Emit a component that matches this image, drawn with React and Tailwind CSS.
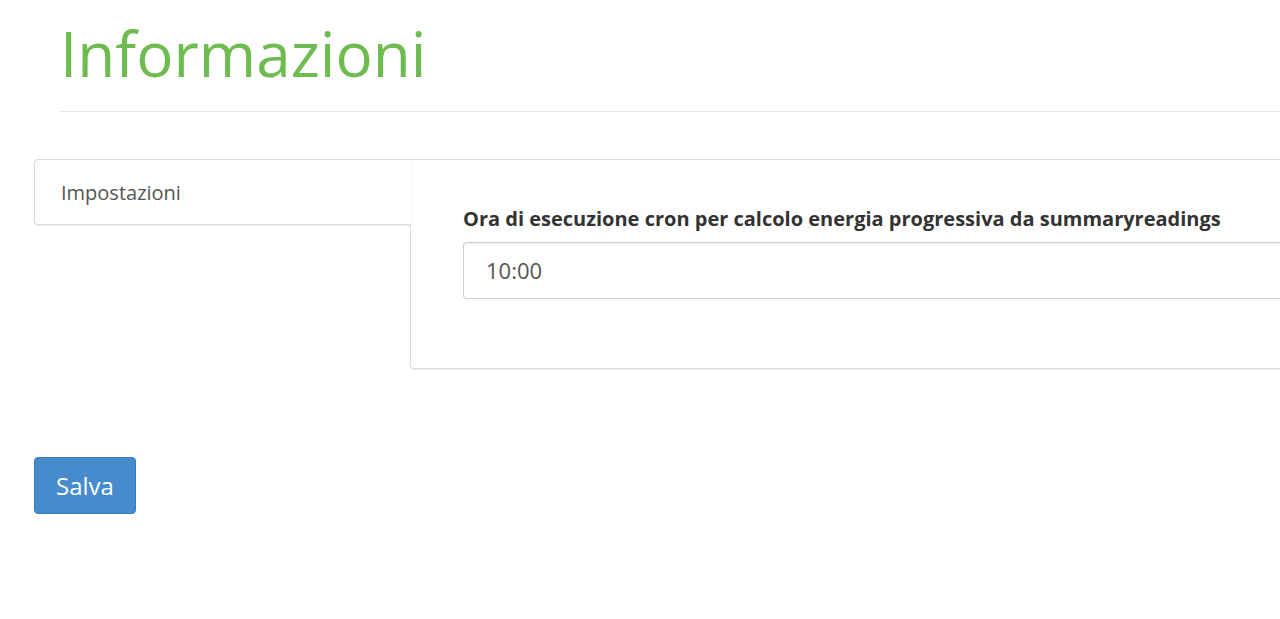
export default function App() {
  return (
    <div className="min-h-[619px] bg-white text-[#333]" style={{ fontFamily: '"Open Sans", "Noto Sans", sans-serif' }}>
      <div className="pl-[59px] pt-[13px]">
        <h1 className="text-[62px] leading-[80px] font-normal text-[#6ebc4f] pl-px">Informazioni</h1>
        <div className="mt-[18px] h-px bg-[#e8e8e8]" />
      </div>
      <div className="pl-[34px] mt-[47px] flex items-start">
        <div className="relative z-10 w-[377px] -mr-px h-[66px] bg-white border border-r-0 border-[#dcdcdc] rounded-l-[4px] shadow-[0_1px_2px_rgba(0,0,0,0.08)] flex items-center pl-[26px] pt-[2px] text-[20px] text-[#555]">
          Impostazioni
        </div>
        <div className="flex-1 h-[210px] border border-r-0 border-[#dcdcdc] rounded-bl-[4px] shadow-[0_1px_2px_rgba(0,0,0,0.08)] pl-[52px] pt-[45px]">
          <div className="text-[20px] leading-[28px] font-bold text-[#333]">
            Ora di esecuzione cron per calcolo energia progressiva da summaryreadings
          </div>
          <div className="mt-[9px] h-[57px] border border-r-0 border-[#cfcfcf] rounded-l-[4px] shadow-[inset_0_1px_1px_rgba(0,0,0,0.06)] flex items-center pl-[22px] text-[22px] text-[#555]">
            10:00
          </div>
        </div>
      </div>
      <div className="pl-[34px] mt-[88px]">
        <button className="w-[102px] h-[57px] rounded-[4px] bg-[#468bcb] border border-[#3a7bbb] text-white text-[24px]">
          Salva
        </button>
      </div>
    </div>
  );
}
